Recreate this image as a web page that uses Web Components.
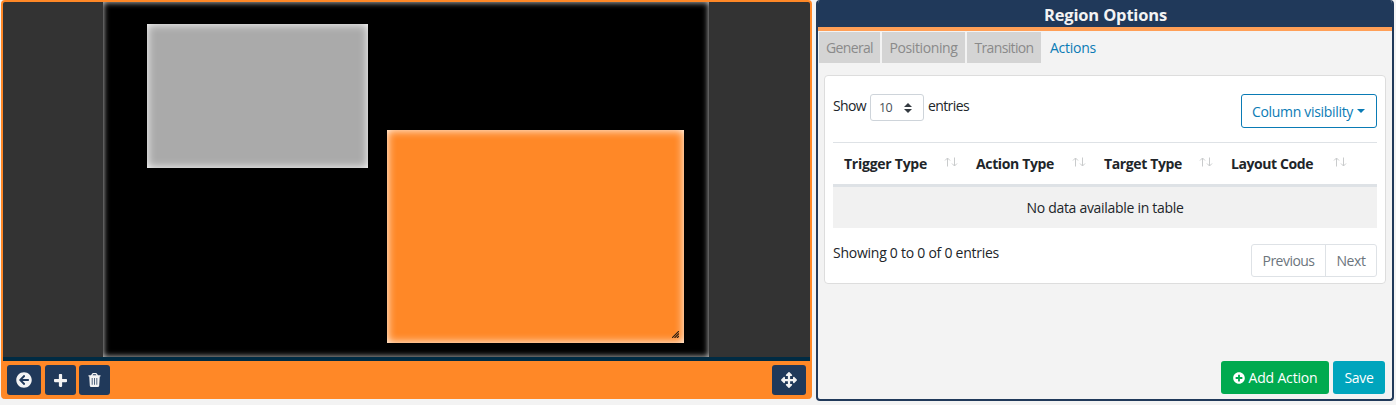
<!DOCTYPE html>
<html lang="en">
<head>
<meta charset="utf-8">
<title>Layout editor</title>
<style>
html,body{margin:0;height:100%;overflow:hidden;background:#f3f3f3}
body{font:14px/20px "Open Sans","Noto Sans",sans-serif;color:#212529}
</style>
</head>
<body>
<layout-editor></layout-editor>
<script>
function define(name, html, setup) {
  customElements.define(name, class extends HTMLElement {
    connectedCallback() {
      if (this.shadowRoot) return;
      const t = document.createElement('template');
      t.innerHTML = '<style>*{box-sizing:border-box}</style>' + html;
      this.attachShadow({ mode: 'open' }).append(t.content.cloneNode(true));
      if (setup) setup(this);
    }
  });
}

/* A text run whose tracking is adjusted to occupy the width in `w`. */
define('fit-text', `<style>:host{display:inline-block;white-space:nowrap}span{display:inline-block}</style><span></span>`, el => {
  const s = el.shadowRoot.querySelector('span');
  s.textContent = el.getAttribute('text');
  const w = +el.getAttribute('w');
  el.style.width = w + 'px';
  const n = s.textContent.length;
  s.style.letterSpacing = (w - s.getBoundingClientRect().width) / n + 'px';
});

const ICONS = {
  back: ['0 0 512 512', 'M256 504C119 504 8 393 8 256S119 8 256 8s248 111 248 248-111 248-248 248zm28.900-143.600L209.400 288H392c13.300 0 24-10.700 24-24v-16c0-13.300-10.700-24-24-24H209.400l75.500-72.400c9.700-9.300 9.900-24.800.4-34.300l-11-10.900c-9.400-9.400-24.600-9.400-33.900 0L107.700 239c-9.400 9.400-9.400 24.600 0 33.900l132.700 132.700c9.400 9.400 24.600 9.400 33.900 0l11-10.900c9.500-9.500 9.300-25-.4-34.300z'],
  plus: ['0 0 448 512', 'M416 200H280V64c0-17.670-14.330-32-32-32h-48c-17.670 0-32 14.330-32 32v136H32c-17.670 0-32 14.330-32 32v48c0 17.670 14.330 32 32 32h136v136c0 17.670 14.330 32 32 32h48c17.670 0 32-14.330 32-32V312h136c17.670 0 32-14.330 32-32v-48c0-17.670-14.330-32-32-32z'],
  trash: ['0 0 448 512', 'M432 80h-82l-34-56C307 9 291 0 274 0H174c-17 0-33 9-41 23L98 80H16C7 80 0 87 0 96v16c0 9 7 16 16 16h16l21 339c2 25 23 45 48 45h246c25 0 46-20 48-45l21-339h16c9 0 16-7 16-16V96c0-9-7-16-16-16zM171 51q2-3 5-3h96q3 0 5 3l17 29H154zM124 180h28v250h-28zM210 180h28v250h-28zM296 180h28v250h-28z'],
  move: ['0 0 512 512', 'M352.200 425.800l-79.200 79.200c-9.400 9.400-24.600 9.400-33.900 0l-79.200-79.200c-15.100-15.100-4.400-41 17-41h43.200V292H127.200v43.200c0 21.400-25.900 32.100-41 17L7 272.900c-9.400-9.400-9.400-24.600 0-33.900L86.200 159.800c15.100-15.100 41-4.400 41 17V220H220V127.200h-43.200c-21.400 0-32.100-25.900-17-41L239 7c9.400-9.400 24.600-9.400 33.900 0l79.200 79.200c15.100 15.100 4.400 41-17 41H292V220h92.800v-43.200c0-21.400 25.900-32.100 41-17L505 239c9.400 9.400 9.400 24.600 0 33.900l-79.200 79.200c-15.100 15.100-41 4.400-41-17V292H292v92.800h43.200c21.400 0 32.100 25.900 17 41z'],
  circleplus: ['0 0 512 512', 'M256 8C119 8 8 119 8 256s111 248 248 248 248-111 248-248S393 8 256 8zm144 276c0 6.600-5.400 12-12 12h-92v92c0 6.600-5.400 12-12 12h-56c-6.600 0-12-5.400-12-12v-92h-92c-6.600 0-12-5.400-12-12v-56c0-6.600 5.400-12 12-12h92v-92c0-6.600 5.400-12 12-12h56c6.600 0 12 5.400 12 12v92h92c6.600 0 12 5.400 12 12v56z']
};
define('ui-icon', `<style>:host{display:inline-block}svg{display:block;width:100%;height:100%}</style><svg><path fill="currentColor" fill-rule="evenodd"/></svg>`, el => {
  const [box, d] = ICONS[el.getAttribute('name')];
  el.shadowRoot.querySelector('svg').setAttribute('viewBox', box);
  el.shadowRoot.querySelector('path').setAttribute('d', d);
});

define('tool-button', `<style>:host{display:flex;align-items:center;justify-content:center;width:31px;height:30px;border-radius:3px;background:#20395a;color:#f3f3f3;box-sizing:border-box}:host([wide]){width:34px}</style><slot></slot>`);

define('canvas-region', `<style>:host{position:absolute;background:#aaa;box-shadow:inset 0 0 10px #fff}:host([selected]){background:#ff8827}svg{position:absolute;right:5px;bottom:5px;width:7px;height:7px;display:none}:host([selected]) svg{display:block}</style>
<svg viewBox="0 0 7 7" fill="none" stroke="#2b1c10" stroke-width="1.100"><path d="M0 7L7 0M2.500 7L7 2.500M5 7L7 5"/></svg>`);

define('layout-viewer', `<style>
:host{display:flex;flex-direction:column;width:811px;height:399px;border:2px solid #ff8827;border-bottom:0;border-radius:4px;background:#ff8827;box-sizing:border-box;overflow:hidden}
.view{height:355px;background:#333;display:flex;justify-content:center;padding-right:1px}
.stage{position:relative;width:606px;height:355px;background:#000;box-shadow:inset 0 0 6px #ddd}
.line{height:4px;background:#002b43}
.bar{display:flex;align-items:center;height:38px;padding:0 4px}
.bar tool-button+tool-button{margin-left:3px}.bar tool-button:nth-child(2){margin-left:4px}.bar tool-button:last-child{margin-left:auto}
</style>
<div class="view"><div class="stage">
<canvas-region style="left:44px;top:22px;width:221px;height:144px"></canvas-region>
<canvas-region selected style="left:284px;top:128px;width:297px;height:213px"></canvas-region>
</div></div><div class="line"></div>
<div class="bar">
<tool-button wide><ui-icon name="back" style="width:16px;height:16px"></ui-icon></tool-button>
<tool-button><ui-icon name="plus" style="width:13px;height:15px;margin-right:1px"></ui-icon></tool-button>
<tool-button><ui-icon name="trash" style="width:13px;height:14px"></ui-icon></tool-button>
<tool-button wide><ui-icon name="move" style="width:16px;height:16px"></ui-icon></tool-button>
</div>`);

define('nav-tab', `<style>:host{display:flex;align-items:center;justify-content:center;height:31px;background:#d4d4d4;color:#8a8a8a;padding-top:1px;box-sizing:border-box}:host([active]){background:none;color:#0a7bb5}</style><slot></slot>`);

define('panel-tabs', `<style>:host{display:flex;gap:2px;height:31px;margin:1px 0 0 1px}</style>
<nav-tab style="width:61px"><fit-text text="General" w="47"></fit-text></nav-tab>
<nav-tab style="width:83px"><fit-text text="Positioning" w="68"></fit-text></nav-tab>
<nav-tab style="width:74px"><fit-text text="Transition" w="59"></fit-text></nav-tab>
<nav-tab active style="width:60px"><fit-text text="Actions" w="46"></fit-text></nav-tab>`);

define('column-head', `<style>:host{display:flex;align-items:center;justify-content:space-between;height:41px;font-weight:700;padding:1px 7px 0 11px;box-sizing:border-box}svg{width:14px;height:10px;margin-top:-4px}</style>
<slot></slot><svg viewBox="0 0 14 10" fill="none" stroke="#c9cbcc"><path d="M3.500 9.500V1M1 3.500L3.500 1L6 3.500M10.500 .5V9M8 6.500L10.500 9L13 6.500"/></svg>`);

define('actions-table', `<style>
:host{display:block;width:544px;border-top:1px solid #dee2e6}
.head{display:grid;grid-template-columns:132px 128px 127px 134px 1fr;border-bottom:3px solid #dee2e6;height:44px}
.row{display:flex;justify-content:center;align-items:center;height:41px;background:#f1f1f1;padding-top:1px}
</style>
<div class="head">
<column-head><fit-text text="Trigger Type" w="83"></fit-text></column-head>
<column-head><fit-text text="Action Type" w="78"></fit-text></column-head>
<column-head><fit-text text="Target Type" w="78"></fit-text></column-head>
<column-head><fit-text text="Layout Code" w="82"></fit-text></column-head><span></span>
</div><div class="row"><fit-text text="No data available in table" w="157"></fit-text></div>`);

define('length-menu', `<style>
:host{display:flex;align-items:flex-start;gap:4px}
.label{margin-top:2px}
.select{display:flex;align-items:center;justify-content:space-between;width:54px;height:27px;border:1px solid #ced4da;border-radius:3px;padding:1px 11px 0 8px;color:#495057;font-size:12.500px}
svg{width:8px;height:10px}
</style><fit-text class="label" text="Show" w="33"></fit-text><span class="select"><fit-text text="10" w="13"></fit-text><svg viewBox="0 0 8 10" fill="#343a40"><path d="M0 4L4 0L8 4zM0 6L4 10L8 6z"/></svg></span><fit-text class="label" text="entries" w="41"></fit-text>`);

define('column-visibility', `<style>
:host{display:flex;align-items:center;justify-content:center;gap:4px;width:136px;height:34px;border:1px solid #0a7bb5;border-radius:3px;color:#0a7bb5;box-sizing:border-box;padding:1px 1px 0 0}
i{border:4px solid transparent;border-top-color:currentColor;border-bottom:0;margin-bottom:1px}
</style><fit-text text="Column visibility" w="101"></fit-text><i></i>`);

define('table-pager', `<style>
:host{display:flex;width:126px;height:33px;border:1px solid #dee2e6;border-radius:3px;color:#6c757d;box-sizing:border-box}
span{display:flex;align-items:center;justify-content:center;width:50px;padding-top:1px}
.prev{width:74px;border-right:1px solid #dee2e6}
</style><span class="prev"><fit-text text="Previous" w="52"></fit-text></span><span><fit-text text="Next" w="29"></fit-text></span>`);

define('action-button', `<style>:host{display:flex;align-items:center;justify-content:center;gap:4px;height:33px;border-radius:3px;color:#fff;box-sizing:border-box;padding-top:1px}</style><slot></slot>`);

define('region-options', `<style>
:host{display:flex;flex-direction:column;width:578px;height:401px;border:2px solid #20395a;border-top:0;border-radius:4px;background:#f3f3f3;box-sizing:border-box;overflow:hidden}
.title{height:31px;border-bottom:4px solid #ff9f57;background:#20395a;color:#f3f3f3;font:700 16.500px/30px "Open Sans","Noto Sans",sans-serif;text-align:center;padding-left:1px}
.card{height:209px;width:562px;margin:12px 0 0 6px;padding:18px 8px 0;background:#fff;border:1px solid #ddd;border-radius:4px}
.top,.bottom{display:flex;justify-content:space-between;align-items:flex-start}
.top{height:48px}
.bottom{margin-top:16px}
.bottom fit-text{margin-top:-1px}
.footer{display:flex;gap:4px;justify-content:flex-end;margin:auto 7px 5px 0}
</style>
<div class="title"><fit-text text="Region Options" w="123"></fit-text></div>
<panel-tabs></panel-tabs>
<div class="card">
<div class="top"><length-menu></length-menu><column-visibility></column-visibility></div>
<actions-table></actions-table>
<div class="bottom"><fit-text text="Showing 0 to 0 of 0 entries" w="166"></fit-text><table-pager></table-pager></div>
</div>
<div class="footer">
<action-button style="width:108px;background:#00aa4f"><ui-icon name="circleplus" style="width:12px;height:12px"></ui-icon><fit-text text="Add Action" w="69"></fit-text></action-button>
<action-button style="width:52px;background:#00a5bd"><fit-text text="Save" w="29"></fit-text></action-button>
</div>`);

define('layout-editor', `<style>:host{display:flex;gap:4px;padding-left:1px;height:405px;box-sizing:border-box;align-items:flex-start}</style><layout-viewer></layout-viewer><region-options></region-options>`);
</script>
</body>
</html>
